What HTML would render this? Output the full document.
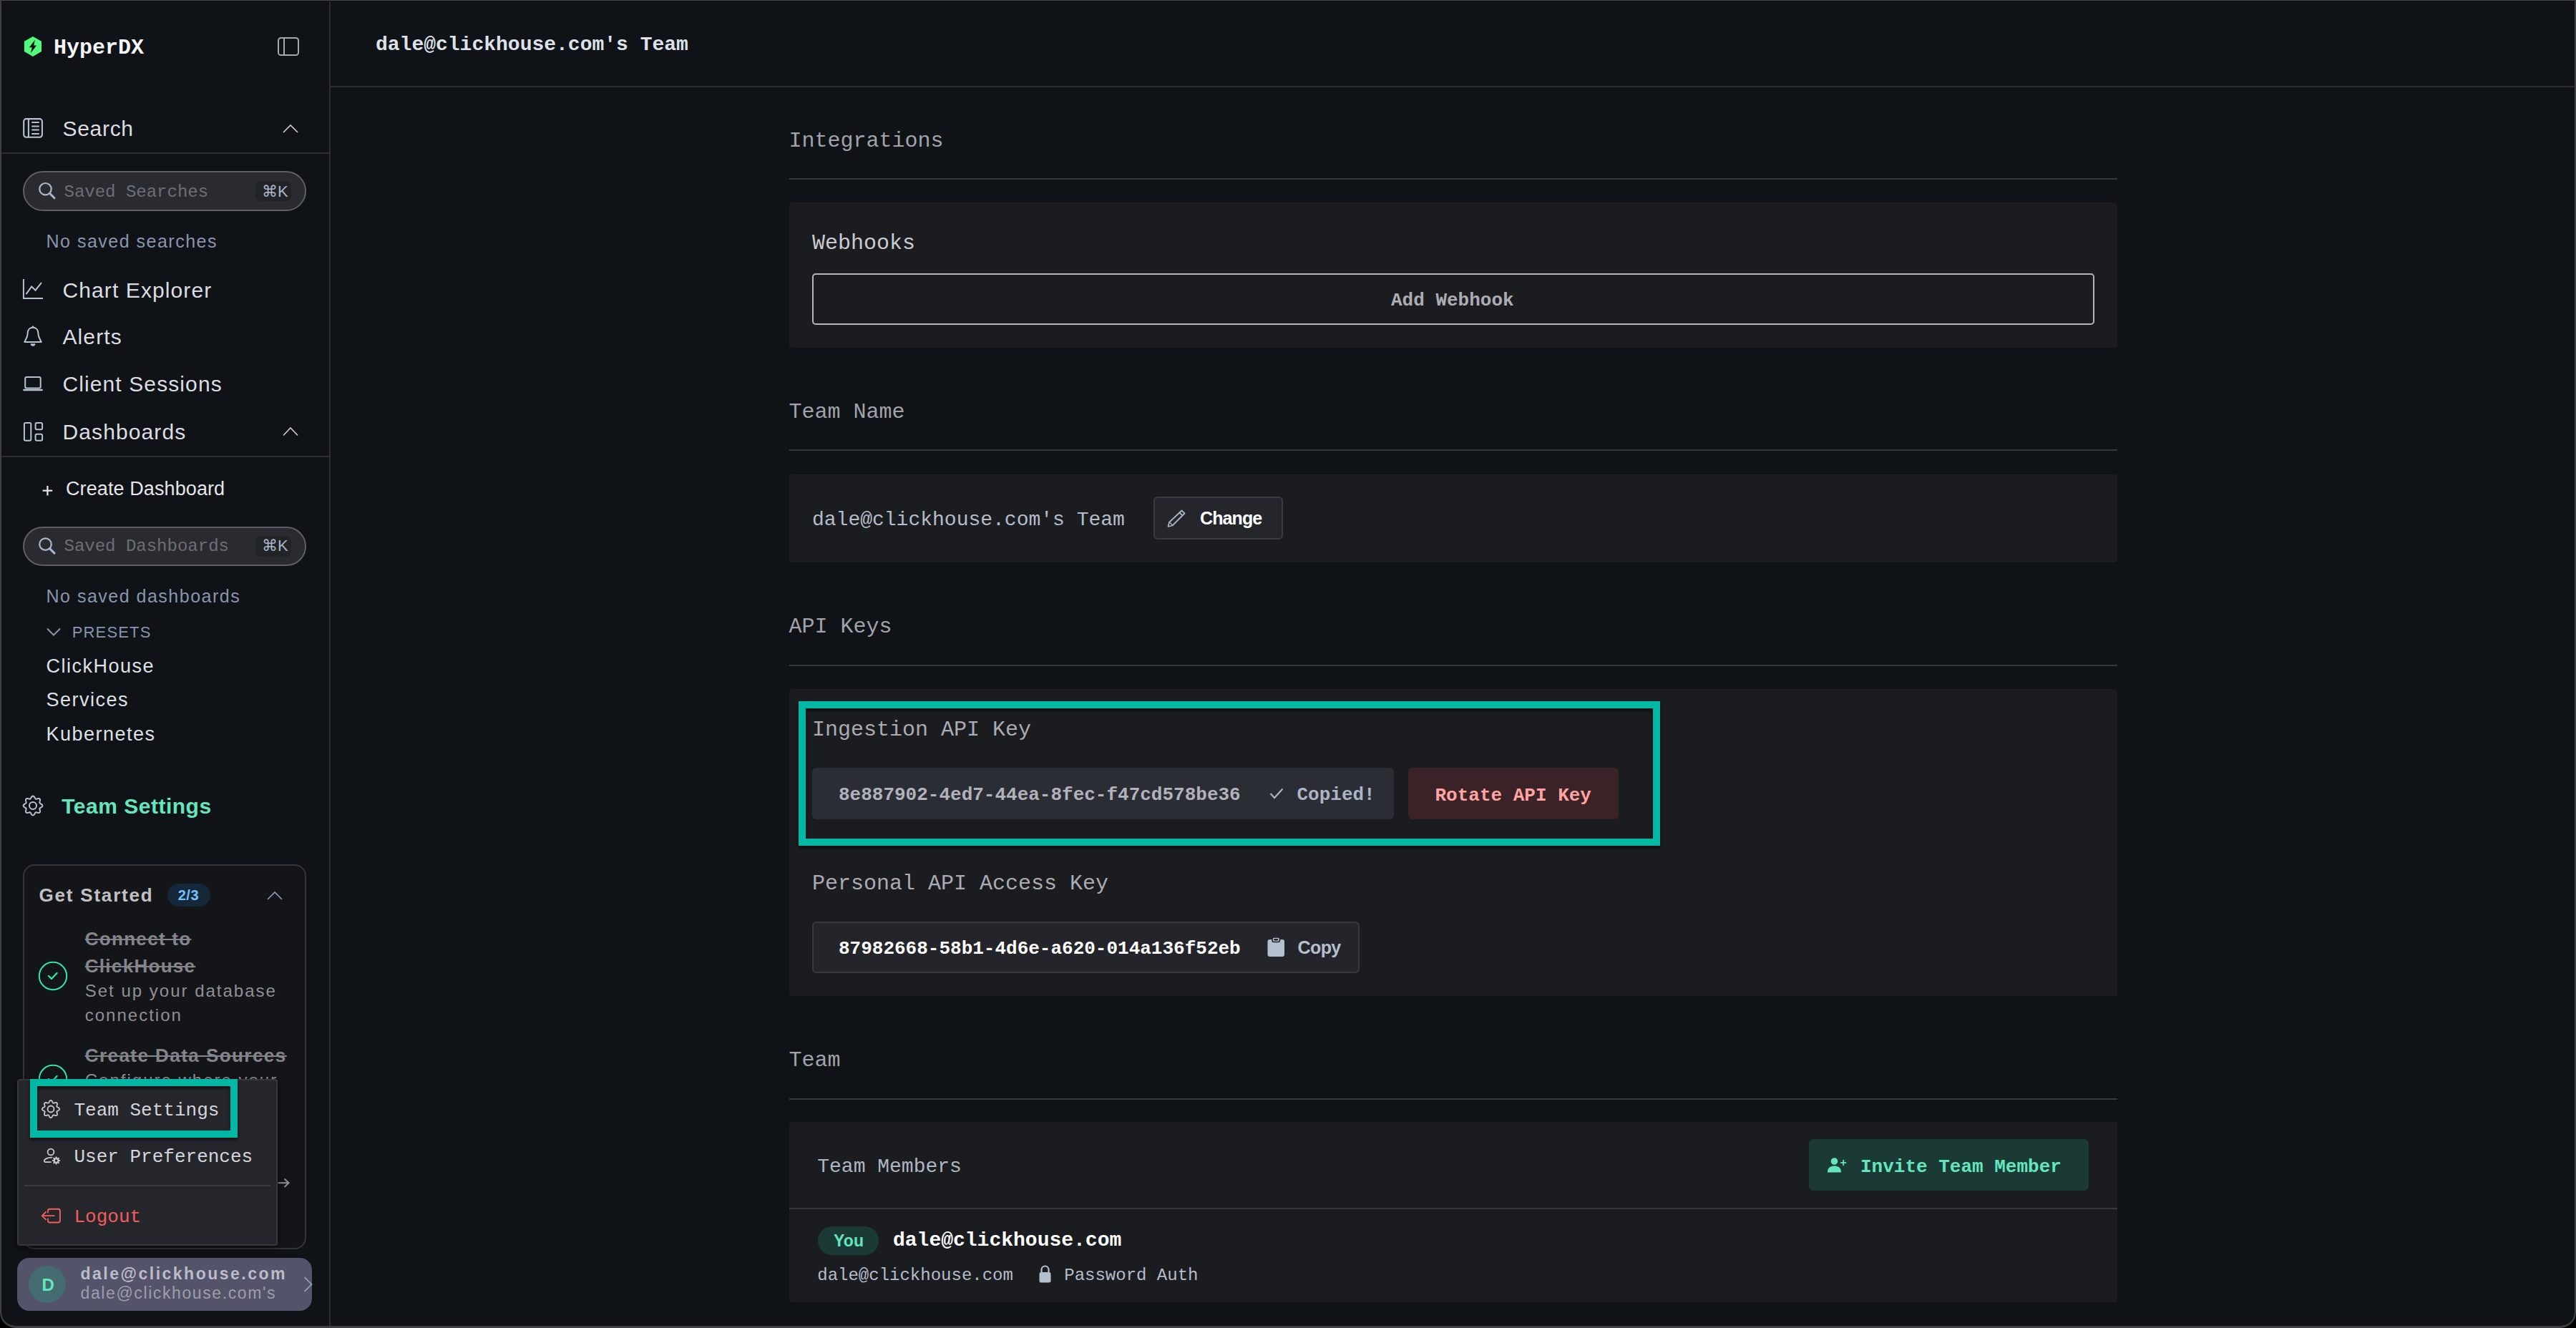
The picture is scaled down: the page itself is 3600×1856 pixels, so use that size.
<!DOCTYPE html>
<html><head><meta charset="utf-8"><title>HyperDX Team Settings</title>
<style>html,body{margin:0;padding:0;width:3600px;height:1856px;overflow:hidden;background:#000}</style>
</head><body><div style="position:relative;width:3600px;height:1856px;overflow:hidden">
<div style="position:absolute;left:0;top:0;width:3600px;height:1856px;background:#000"></div>
<div style="position:absolute;left:0;top:0;width:3596px;height:1852px;background:#0f1216;border:2px solid #3f4046;border-top-width:1px;border-top-color:#47464e;border-bottom-width:3px;border-radius:0 0 22px 22px;overflow:hidden"></div>
<div style="position:absolute;left:460px;top:2px;width:2px;height:1851px;background:#2b2d32"></div>
<div style="position:absolute;left:462px;top:120px;width:3136px;height:2px;background:#2b2d32"></div>
<svg style="position:absolute;left:30px;top:48px;" width="32" height="34" viewBox="30 48 32 34"><polygon points="45.95,50.9 58,57.7 58,72 45.95,78.9 33.9,72 33.9,57.7" fill="#52f97b"/><polygon points="48.9,55.7 40.9,66.3 44.8,66.3 42.9,74.3 51.1,63.5 47.2,63.5" fill="#0b0d0f"/></svg>
<div style="position:absolute;left:75.00px;top:52.12px;font-family:'Liberation Mono', monospace;font-size:30px;line-height:30px;font-weight:700;color:#f4f5f7;letter-spacing:0px;white-space:pre;">HyperDX</div>
<svg style="position:absolute;left:384px;top:48px;" width="40" height="34" viewBox="384 48 40 34"><rect x="389" y="53" width="28" height="24" rx="3.5" fill="none" stroke="#a6a8b0" stroke-width="2"/><line x1="397" y1="53" x2="397" y2="77" stroke="#a6a8b0" stroke-width="2"/></svg>
<svg style="position:absolute;left:28px;top:160px;" width="36" height="38" viewBox="28 160 36 38"><rect x="33.2" y="166.1" width="25.7" height="25.7" rx="3.5" fill="none" stroke="#b8c1cf" stroke-width="2.1"/><line x1="39.9" y1="166" x2="39.9" y2="192" stroke="#b8c1cf" stroke-width="2.1"/><line x1="45" y1="171" x2="54" y2="171" stroke="#b8c1cf" stroke-width="2" stroke-linecap="round"/><line x1="45" y1="176.4" x2="54" y2="176.4" stroke="#b8c1cf" stroke-width="2" stroke-linecap="round"/><line x1="45" y1="181.6" x2="54" y2="181.6" stroke="#b8c1cf" stroke-width="2" stroke-linecap="round"/><line x1="45" y1="187" x2="54" y2="187" stroke="#b8c1cf" stroke-width="2" stroke-linecap="round"/></svg>
<div style="position:absolute;left:87.50px;top:165.10px;font-family:'Liberation Sans', sans-serif;font-size:30px;line-height:30px;font-weight:400;color:#dcdde1;letter-spacing:0.7px;white-space:pre;">Search</div>
<svg style="position:absolute;left:394px;top:171.5px;" width="24" height="16.0" viewBox="394 171.5 24 16.0"><polyline points="396,184.5 406,174.5 416,184.5" fill="none" stroke="#c9cad0" stroke-width="1.7"/></svg>
<div style="position:absolute;left:2px;top:213px;width:458px;height:2px;background:#2b2d32"></div>
<div style="position:absolute;left:32px;top:239px;width:391.5px;height:51.5px;border:2px solid #5d5e66;border-radius:30px;background:#2a2b31"></div>
<svg style="position:absolute;left:50px;top:250px;" width="32" height="32" viewBox="50 250 32 32"><circle cx="63.5" cy="264.2" r="8.2" fill="none" stroke="#a9b7ca" stroke-width="2.2"/><line x1="69.5" y1="270.2" x2="76" y2="276.8" stroke="#a9b7ca" stroke-width="3" stroke-linecap="round"/></svg>
<div style="position:absolute;left:89.50px;top:256.89px;font-family:'Liberation Mono', monospace;font-size:24px;line-height:24px;font-weight:400;color:#6d6e75;letter-spacing:0px;white-space:pre;">Saved Searches</div>
<div style="position:absolute;left:357px;top:252.5px;width:50px;height:28.5px;background:#222327;border-radius:8px"></div>
<div style="position:absolute;left:366.00px;top:257.37px;font-family:'Liberation Sans', sans-serif;font-size:22px;line-height:22px;font-weight:400;color:#a9b6c8;letter-spacing:0px;white-space:pre;">⌘K</div>
<div style="position:absolute;left:64.50px;top:325.08px;font-family:'Liberation Sans', sans-serif;font-size:25px;line-height:25px;font-weight:400;color:#8795ad;letter-spacing:1.5px;white-space:pre;">No saved searches</div>
<svg style="position:absolute;left:28px;top:386px;" width="36" height="36" viewBox="28 386 36 36"><polyline points="32.9,389.9 32.9,417 60,417" fill="none" stroke="#b8c1cf" stroke-width="2"/><polyline points="37,410.4 44.2,400.5 49.5,405.7 57.5,395.6" fill="none" stroke="#b8c1cf" stroke-width="2" stroke-linecap="round"/></svg>
<div style="position:absolute;left:87.50px;top:390.85px;font-family:'Liberation Sans', sans-serif;font-size:30px;line-height:30px;font-weight:400;color:#dcdde1;letter-spacing:1.1px;white-space:pre;">Chart Explorer</div>
<svg style="position:absolute;left:28px;top:452px;" width="36" height="36" viewBox="28 452 36 36"><path d="M34.3,478 L37.6,471 C38.3,469 38.6,467 38.7,465 C39,460.5 42,457.7 46,457.7 C50,457.7 53,460.5 53.3,465 C53.4,467 53.7,469 54.4,471 L57.7,478 Z" fill="none" stroke="#b8c1cf" stroke-width="2" stroke-linejoin="round"/><circle cx="46" cy="456.8" r="1.4" fill="#b8c1cf"/><path d="M42.6,480.3 A3.4,3.4 0 0 0 49.4,480.3 Z" fill="#b8c1cf"/></svg>
<div style="position:absolute;left:87.50px;top:456.35px;font-family:'Liberation Sans', sans-serif;font-size:30px;line-height:30px;font-weight:400;color:#dcdde1;letter-spacing:1.1px;white-space:pre;">Alerts</div>
<svg style="position:absolute;left:28px;top:520px;" width="36" height="32" viewBox="28 520 36 32"><rect x="35.2" y="527.1" width="21.5" height="15.3" rx="2" fill="none" stroke="#b8c1cf" stroke-width="2"/><rect x="32.2" y="543.8" width="27.7" height="2.4" rx="1.2" fill="#b8c1cf"/></svg>
<div style="position:absolute;left:87.50px;top:522.10px;font-family:'Liberation Sans', sans-serif;font-size:30px;line-height:30px;font-weight:400;color:#dcdde1;letter-spacing:1.1px;white-space:pre;">Client Sessions</div>
<svg style="position:absolute;left:28px;top:585px;" width="36" height="36" viewBox="28 585 36 36"><rect x="33.9" y="591" width="9.4" height="24.8" rx="1.8" fill="none" stroke="#b8c1cf" stroke-width="2"/><rect x="49.6" y="591" width="9.5" height="9.3" rx="1.8" fill="none" stroke="#b8c1cf" stroke-width="2"/><rect x="49.6" y="606.7" width="9.5" height="9.1" rx="1.8" fill="none" stroke="#b8c1cf" stroke-width="2"/></svg>
<div style="position:absolute;left:87.50px;top:588.85px;font-family:'Liberation Sans', sans-serif;font-size:30px;line-height:30px;font-weight:400;color:#dcdde1;letter-spacing:1.1px;white-space:pre;">Dashboards</div>
<svg style="position:absolute;left:394px;top:595px;" width="24" height="16.5" viewBox="394 595 24 16.5"><polyline points="396,608.5 406,598 416,608.5" fill="none" stroke="#c9cad0" stroke-width="1.7"/></svg>
<div style="position:absolute;left:2px;top:636.5px;width:458px;height:2.0px;background:#2b2d32"></div>
<svg style="position:absolute;left:56px;top:675px;" width="20" height="20" viewBox="56 675 20 20"><line x1="66.4" y1="679" x2="66.4" y2="692.5" stroke="#e6e7ea" stroke-width="2.2"/><line x1="59.6" y1="685.7" x2="73.2" y2="685.7" stroke="#e6e7ea" stroke-width="2.2"/></svg>
<div style="position:absolute;left:92.00px;top:670.39px;font-family:'Liberation Sans', sans-serif;font-size:27px;line-height:27px;font-weight:400;color:#e4e5e8;letter-spacing:0.1px;white-space:pre;">Create Dashboard</div>
<div style="position:absolute;left:32px;top:735.5px;width:391.5px;height:51.25px;border:2px solid #5d5e66;border-radius:30px;background:#2a2b31"></div>
<svg style="position:absolute;left:50px;top:747px;" width="32" height="32" viewBox="50 747 32 32"><circle cx="63.5" cy="760.6" r="8.2" fill="none" stroke="#a9b7ca" stroke-width="2.2"/><line x1="69.5" y1="766.6" x2="76" y2="773.1" stroke="#a9b7ca" stroke-width="3" stroke-linecap="round"/></svg>
<div style="position:absolute;left:89.50px;top:751.89px;font-family:'Liberation Mono', monospace;font-size:24px;line-height:24px;font-weight:400;color:#6d6e75;letter-spacing:0px;white-space:pre;">Saved Dashboards</div>
<div style="position:absolute;left:357px;top:749.0px;width:50px;height:28.5px;background:#222327;border-radius:8px"></div>
<div style="position:absolute;left:366.00px;top:752.37px;font-family:'Liberation Sans', sans-serif;font-size:22px;line-height:22px;font-weight:400;color:#a9b6c8;letter-spacing:0px;white-space:pre;">⌘K</div>
<div style="position:absolute;left:64.50px;top:820.58px;font-family:'Liberation Sans', sans-serif;font-size:25px;line-height:25px;font-weight:400;color:#8795ad;letter-spacing:1.5px;white-space:pre;">No saved dashboards</div>
<svg style="position:absolute;left:62px;top:872px;" width="26" height="20" viewBox="62 872 26 20"><polyline points="66,878.5 75,887.5 84,878.5" fill="none" stroke="#8795ad" stroke-width="2"/></svg>
<div style="position:absolute;left:100.75px;top:873.37px;font-family:'Liberation Sans', sans-serif;font-size:22px;line-height:22px;font-weight:400;color:#8795ad;letter-spacing:1.15px;white-space:pre;">PRESETS</div>
<div style="position:absolute;left:64.50px;top:917.89px;font-family:'Liberation Sans', sans-serif;font-size:27px;line-height:27px;font-weight:400;color:#dfe0e6;letter-spacing:1.5px;white-space:pre;">ClickHouse</div>
<div style="position:absolute;left:64.50px;top:965.14px;font-family:'Liberation Sans', sans-serif;font-size:27px;line-height:27px;font-weight:400;color:#dfe0e6;letter-spacing:1.5px;white-space:pre;">Services</div>
<div style="position:absolute;left:64.50px;top:1012.64px;font-family:'Liberation Sans', sans-serif;font-size:27px;line-height:27px;font-weight:400;color:#dfe0e6;letter-spacing:1.5px;white-space:pre;">Kubernetes</div>
<svg style="position:absolute;left:28px;top:1108px;" width="36" height="36" viewBox="28 1108 36 36"><path d="M46.00,1112.60 L46.35,1112.64 L46.69,1112.76 L47.03,1112.95 L47.35,1113.20 L47.64,1113.51 L47.92,1113.86 L48.18,1114.23 L48.42,1114.62 L48.64,1115.01 L48.85,1115.37 L49.05,1115.71 L49.25,1116.01 L49.45,1116.25 L49.67,1116.44 L49.90,1116.58 L50.16,1116.65 L50.45,1116.67 L50.77,1116.64 L51.12,1116.57 L51.50,1116.47 L51.91,1116.36 L52.34,1116.24 L52.78,1116.14 L53.23,1116.05 L53.67,1116.00 L54.10,1116.00 L54.50,1116.04 L54.87,1116.14 L55.20,1116.31 L55.48,1116.52 L55.69,1116.80 L55.86,1117.13 L55.96,1117.50 L56.00,1117.90 L56.00,1118.33 L55.95,1118.77 L55.86,1119.22 L55.76,1119.66 L55.64,1120.09 L55.53,1120.50 L55.43,1120.88 L55.36,1121.23 L55.33,1121.55 L55.35,1121.84 L55.42,1122.10 L55.56,1122.33 L55.75,1122.55 L55.99,1122.75 L56.29,1122.95 L56.63,1123.15 L56.99,1123.36 L57.38,1123.58 L57.77,1123.82 L58.14,1124.08 L58.49,1124.36 L58.80,1124.65 L59.05,1124.97 L59.24,1125.31 L59.36,1125.65 L59.40,1126.00 L59.36,1126.35 L59.24,1126.69 L59.05,1127.03 L58.80,1127.35 L58.49,1127.64 L58.14,1127.92 L57.77,1128.18 L57.38,1128.42 L56.99,1128.64 L56.63,1128.85 L56.29,1129.05 L55.99,1129.25 L55.75,1129.45 L55.56,1129.67 L55.42,1129.90 L55.35,1130.16 L55.33,1130.45 L55.36,1130.77 L55.43,1131.12 L55.53,1131.50 L55.64,1131.91 L55.76,1132.34 L55.86,1132.78 L55.95,1133.23 L56.00,1133.67 L56.00,1134.10 L55.96,1134.50 L55.86,1134.87 L55.69,1135.20 L55.48,1135.48 L55.20,1135.69 L54.87,1135.86 L54.50,1135.96 L54.10,1136.00 L53.67,1136.00 L53.23,1135.95 L52.78,1135.86 L52.34,1135.76 L51.91,1135.64 L51.50,1135.53 L51.12,1135.43 L50.77,1135.36 L50.45,1135.33 L50.16,1135.35 L49.90,1135.42 L49.67,1135.56 L49.45,1135.75 L49.25,1135.99 L49.05,1136.29 L48.85,1136.63 L48.64,1136.99 L48.42,1137.38 L48.18,1137.77 L47.92,1138.14 L47.64,1138.49 L47.35,1138.80 L47.03,1139.05 L46.69,1139.24 L46.35,1139.36 L46.00,1139.40 L45.65,1139.36 L45.31,1139.24 L44.97,1139.05 L44.65,1138.80 L44.36,1138.49 L44.08,1138.14 L43.82,1137.77 L43.58,1137.38 L43.36,1136.99 L43.15,1136.63 L42.95,1136.29 L42.75,1135.99 L42.55,1135.75 L42.33,1135.56 L42.10,1135.42 L41.84,1135.35 L41.55,1135.33 L41.23,1135.36 L40.88,1135.43 L40.50,1135.53 L40.09,1135.64 L39.66,1135.76 L39.22,1135.86 L38.77,1135.95 L38.33,1136.00 L37.90,1136.00 L37.50,1135.96 L37.13,1135.86 L36.80,1135.69 L36.52,1135.48 L36.31,1135.20 L36.14,1134.87 L36.04,1134.50 L36.00,1134.10 L36.00,1133.67 L36.05,1133.23 L36.14,1132.78 L36.24,1132.34 L36.36,1131.91 L36.47,1131.50 L36.57,1131.12 L36.64,1130.77 L36.67,1130.45 L36.65,1130.16 L36.58,1129.90 L36.44,1129.67 L36.25,1129.45 L36.01,1129.25 L35.71,1129.05 L35.37,1128.85 L35.01,1128.64 L34.62,1128.42 L34.23,1128.18 L33.86,1127.92 L33.51,1127.64 L33.20,1127.35 L32.95,1127.03 L32.76,1126.69 L32.64,1126.35 L32.60,1126.00 L32.64,1125.65 L32.76,1125.31 L32.95,1124.97 L33.20,1124.65 L33.51,1124.36 L33.86,1124.08 L34.23,1123.82 L34.62,1123.58 L35.01,1123.36 L35.37,1123.15 L35.71,1122.95 L36.01,1122.75 L36.25,1122.55 L36.44,1122.33 L36.58,1122.10 L36.65,1121.84 L36.67,1121.55 L36.64,1121.23 L36.57,1120.88 L36.47,1120.50 L36.36,1120.09 L36.24,1119.66 L36.14,1119.22 L36.05,1118.77 L36.00,1118.33 L36.00,1117.90 L36.04,1117.50 L36.14,1117.13 L36.31,1116.80 L36.52,1116.52 L36.80,1116.31 L37.13,1116.14 L37.50,1116.04 L37.90,1116.00 L38.33,1116.00 L38.77,1116.05 L39.22,1116.14 L39.66,1116.24 L40.09,1116.36 L40.50,1116.47 L40.88,1116.57 L41.23,1116.64 L41.55,1116.67 L41.84,1116.65 L42.10,1116.58 L42.33,1116.44 L42.55,1116.25 L42.75,1116.01 L42.95,1115.71 L43.15,1115.37 L43.36,1115.01 L43.58,1114.62 L43.82,1114.23 L44.08,1113.86 L44.36,1113.51 L44.65,1113.20 L44.97,1112.95 L45.31,1112.76 L45.65,1112.64 Z" fill="none" stroke="#b8c1cf" stroke-width="2"/><circle cx="46" cy="1126" r="5" fill="none" stroke="#b8c1cf" stroke-width="2"/></svg>
<div style="position:absolute;left:86.25px;top:1112.10px;font-family:'Liberation Sans', sans-serif;font-size:30px;line-height:30px;font-weight:700;color:#63e6be;letter-spacing:0.5px;white-space:pre;">Team Settings</div>
<div style="position:absolute;left:32px;top:1207.5px;width:391.5px;height:534.75px;border:2px solid #34353a;border-radius:16px;background:#141518"></div>
<div style="position:absolute;left:54.50px;top:1237.99px;font-family:'Liberation Sans', sans-serif;font-size:26px;line-height:26px;font-weight:700;color:#c0c1c6;letter-spacing:1.8px;white-space:pre;">Get Started</div>
<div style="position:absolute;left:234.25px;top:1235px;width:59.5px;height:32px;background:#15283a;border-radius:16px"></div>
<div style="position:absolute;left:248.75px;top:1240.57px;font-family:'Liberation Sans', sans-serif;font-size:20px;line-height:20px;font-weight:700;color:#74c0fc;letter-spacing:0.5px;white-space:pre;">2/3</div>
<svg style="position:absolute;left:372px;top:1243.5px;" width="24" height="16.0" viewBox="372 1243.5 24 16.0"><polyline points="374,1256.5 384,1246.5 394,1256.5" fill="none" stroke="#8d9bb0" stroke-width="1.7"/></svg>
<svg style="position:absolute;left:52px;top:1342px;" width="44" height="44" viewBox="52 1342 44 44"><circle cx="74" cy="1364" r="19.2" fill="none" stroke="#2ee6a6" stroke-width="2"/><polyline points="68,1364 72,1368 79.5,1360" fill="none" stroke="#2ee6a6" stroke-width="2.4" stroke-linecap="round" stroke-linejoin="round"/></svg>
<div style="position:absolute;left:118.75px;top:1299.24px;font-family:'Liberation Sans', sans-serif;font-size:26px;line-height:26px;font-weight:700;color:#84858c;letter-spacing:1.3px;white-space:pre;text-decoration:line-through;text-decoration-thickness:2px">Connect to</div>
<div style="position:absolute;left:118.75px;top:1336.74px;font-family:'Liberation Sans', sans-serif;font-size:26px;line-height:26px;font-weight:700;color:#84858c;letter-spacing:1.3px;white-space:pre;text-decoration:line-through;text-decoration-thickness:2px">ClickHouse</div>
<div style="position:absolute;left:118.75px;top:1373.43px;font-family:'Liberation Sans', sans-serif;font-size:24px;line-height:24px;font-weight:400;color:#8f9096;letter-spacing:2.0px;white-space:pre;">Set up your database</div>
<div style="position:absolute;left:118.75px;top:1407.18px;font-family:'Liberation Sans', sans-serif;font-size:24px;line-height:24px;font-weight:400;color:#8f9096;letter-spacing:2.0px;white-space:pre;">connection</div>
<div style="position:absolute;left:118.75px;top:1461.74px;font-family:'Liberation Sans', sans-serif;font-size:26px;line-height:26px;font-weight:700;color:#84858c;letter-spacing:1.45px;white-space:pre;text-decoration:line-through;text-decoration-thickness:2px">Create Data Sources</div>
<svg style="position:absolute;left:52px;top:1486px;" width="44" height="44" viewBox="52 1486 44 44"><circle cx="74" cy="1508" r="19.2" fill="none" stroke="#2ee6a6" stroke-width="2"/><polyline points="68,1508 72,1512 79.5,1504" fill="none" stroke="#2ee6a6" stroke-width="2.4" stroke-linecap="round" stroke-linejoin="round"/></svg>
<div style="position:absolute;left:118.75px;top:1497.68px;font-family:'Liberation Sans', sans-serif;font-size:24px;line-height:24px;font-weight:400;color:#8f9096;letter-spacing:2.0px;white-space:pre;">Configure where your</div>
<svg style="position:absolute;left:384px;top:1644px;" width="24" height="18" viewBox="384 1644 24 18"><line x1="388.5" y1="1653.2" x2="403.5" y2="1653.2" stroke="#8f9096" stroke-width="2"/><polyline points="397.5,1647.5 403.5,1653.2 397.5,1659" fill="none" stroke="#8f9096" stroke-width="2"/></svg>
<div style="position:absolute;left:24.25px;top:1507.5px;width:359.25px;height:229.75px;border:2px solid #36373c;border-radius:4px;background:#25262c;box-shadow:0 4px 12px rgba(0,0,0,0.45)"></div>
<div style="position:absolute;left:42px;top:1508.25px;width:270px;height:61.25px;border:10px solid #00b8a3;box-shadow:0 3px 4px rgba(0,0,0,0.6), inset 0 3px 5px rgba(0,0,0,0.6)"></div>
<svg style="position:absolute;left:54px;top:1533px;" width="34" height="34" viewBox="54 1533 34 34"><path d="M71.00,1537.90 L71.32,1537.94 L71.63,1538.05 L71.93,1538.22 L72.21,1538.46 L72.48,1538.75 L72.73,1539.07 L72.96,1539.42 L73.17,1539.79 L73.37,1540.14 L73.55,1540.49 L73.73,1540.80 L73.90,1541.07 L74.08,1541.30 L74.27,1541.47 L74.48,1541.59 L74.71,1541.66 L74.97,1541.67 L75.26,1541.64 L75.58,1541.57 L75.92,1541.47 L76.30,1541.36 L76.69,1541.24 L77.09,1541.14 L77.50,1541.05 L77.91,1541.00 L78.30,1540.98 L78.67,1541.02 L79.01,1541.10 L79.31,1541.25 L79.56,1541.44 L79.75,1541.69 L79.90,1541.99 L79.98,1542.33 L80.02,1542.70 L80.00,1543.09 L79.95,1543.50 L79.86,1543.91 L79.76,1544.31 L79.64,1544.70 L79.53,1545.08 L79.43,1545.42 L79.36,1545.74 L79.33,1546.03 L79.34,1546.29 L79.41,1546.52 L79.53,1546.73 L79.70,1546.92 L79.93,1547.10 L80.20,1547.27 L80.51,1547.45 L80.86,1547.63 L81.21,1547.83 L81.58,1548.04 L81.93,1548.27 L82.25,1548.52 L82.54,1548.79 L82.78,1549.07 L82.95,1549.37 L83.06,1549.68 L83.10,1550.00 L83.06,1550.32 L82.95,1550.63 L82.78,1550.93 L82.54,1551.21 L82.25,1551.48 L81.93,1551.73 L81.58,1551.96 L81.21,1552.17 L80.86,1552.37 L80.51,1552.55 L80.20,1552.73 L79.93,1552.90 L79.70,1553.08 L79.53,1553.27 L79.41,1553.48 L79.34,1553.71 L79.33,1553.97 L79.36,1554.26 L79.43,1554.58 L79.53,1554.92 L79.64,1555.30 L79.76,1555.69 L79.86,1556.09 L79.95,1556.50 L80.00,1556.91 L80.02,1557.30 L79.98,1557.67 L79.90,1558.01 L79.75,1558.31 L79.56,1558.56 L79.31,1558.75 L79.01,1558.90 L78.67,1558.98 L78.30,1559.02 L77.91,1559.00 L77.50,1558.95 L77.09,1558.86 L76.69,1558.76 L76.30,1558.64 L75.92,1558.53 L75.58,1558.43 L75.26,1558.36 L74.97,1558.33 L74.71,1558.34 L74.48,1558.41 L74.27,1558.53 L74.08,1558.70 L73.90,1558.93 L73.73,1559.20 L73.55,1559.51 L73.37,1559.86 L73.17,1560.21 L72.96,1560.58 L72.73,1560.93 L72.48,1561.25 L72.21,1561.54 L71.93,1561.78 L71.63,1561.95 L71.32,1562.06 L71.00,1562.10 L70.68,1562.06 L70.37,1561.95 L70.07,1561.78 L69.79,1561.54 L69.52,1561.25 L69.27,1560.93 L69.04,1560.58 L68.83,1560.21 L68.63,1559.86 L68.45,1559.51 L68.27,1559.20 L68.10,1558.93 L67.92,1558.70 L67.73,1558.53 L67.52,1558.41 L67.29,1558.34 L67.03,1558.33 L66.74,1558.36 L66.42,1558.43 L66.08,1558.53 L65.70,1558.64 L65.31,1558.76 L64.91,1558.86 L64.50,1558.95 L64.09,1559.00 L63.70,1559.02 L63.33,1558.98 L62.99,1558.90 L62.69,1558.75 L62.44,1558.56 L62.25,1558.31 L62.10,1558.01 L62.02,1557.67 L61.98,1557.30 L62.00,1556.91 L62.05,1556.50 L62.14,1556.09 L62.24,1555.69 L62.36,1555.30 L62.47,1554.92 L62.57,1554.58 L62.64,1554.26 L62.67,1553.97 L62.66,1553.71 L62.59,1553.48 L62.47,1553.27 L62.30,1553.08 L62.07,1552.90 L61.80,1552.73 L61.49,1552.55 L61.14,1552.37 L60.79,1552.17 L60.42,1551.96 L60.07,1551.73 L59.75,1551.48 L59.46,1551.21 L59.22,1550.93 L59.05,1550.63 L58.94,1550.32 L58.90,1550.00 L58.94,1549.68 L59.05,1549.37 L59.22,1549.07 L59.46,1548.79 L59.75,1548.52 L60.07,1548.27 L60.42,1548.04 L60.79,1547.83 L61.14,1547.63 L61.49,1547.45 L61.80,1547.27 L62.07,1547.10 L62.30,1546.92 L62.47,1546.73 L62.59,1546.52 L62.66,1546.29 L62.67,1546.03 L62.64,1545.74 L62.57,1545.42 L62.47,1545.08 L62.36,1544.70 L62.24,1544.31 L62.14,1543.91 L62.05,1543.50 L62.00,1543.09 L61.98,1542.70 L62.02,1542.33 L62.10,1541.99 L62.25,1541.69 L62.44,1541.44 L62.69,1541.25 L62.99,1541.10 L63.33,1541.02 L63.70,1540.98 L64.09,1541.00 L64.50,1541.05 L64.91,1541.14 L65.31,1541.24 L65.70,1541.36 L66.08,1541.47 L66.42,1541.57 L66.74,1541.64 L67.03,1541.67 L67.29,1541.66 L67.52,1541.59 L67.73,1541.47 L67.92,1541.30 L68.10,1541.07 L68.27,1540.80 L68.45,1540.49 L68.63,1540.14 L68.83,1539.79 L69.04,1539.42 L69.27,1539.07 L69.52,1538.75 L69.79,1538.46 L70.07,1538.22 L70.37,1538.05 L70.68,1537.94 Z" fill="none" stroke="#c8c9ce" stroke-width="1.8"/><circle cx="71" cy="1550" r="4.5" fill="none" stroke="#c8c9ce" stroke-width="1.8"/></svg>
<div style="position:absolute;left:103.50px;top:1538.80px;font-family:'Liberation Mono', monospace;font-size:26px;line-height:26px;font-weight:400;color:#d4d5da;letter-spacing:0px;white-space:pre;">Team Settings</div>
<svg style="position:absolute;left:56px;top:1600px;" width="34" height="34" viewBox="56 1600 34 34"><circle cx="71" cy="1610" r="4.4" fill="none" stroke="#c8c9ce" stroke-width="1.8"/><path d="M72.5,1617.6 C66.5,1617.6 61.8,1620 61.8,1622.6 C61.8,1623.6 62.4,1624.1 63.4,1624.1 L71,1624.1" fill="none" stroke="#c8c9ce" stroke-width="1.8" stroke-linecap="round" stroke-linejoin="round"/><path d="M78.60,1616.20 L78.75,1616.22 L78.90,1616.29 L79.04,1616.41 L79.17,1616.56 L79.29,1616.75 L79.40,1616.95 L79.49,1617.18 L79.58,1617.41 L79.65,1617.63 L79.71,1617.85 L79.77,1618.04 L79.83,1618.20 L79.90,1618.34 L79.97,1618.43 L80.05,1618.49 L80.15,1618.51 L80.27,1618.49 L80.41,1618.44 L80.57,1618.37 L80.75,1618.28 L80.95,1618.17 L81.16,1618.06 L81.38,1617.96 L81.60,1617.87 L81.83,1617.80 L82.04,1617.75 L82.24,1617.73 L82.42,1617.75 L82.58,1617.81 L82.70,1617.90 L82.79,1618.02 L82.85,1618.18 L82.87,1618.36 L82.85,1618.56 L82.80,1618.77 L82.73,1619.00 L82.64,1619.22 L82.54,1619.44 L82.43,1619.65 L82.32,1619.85 L82.23,1620.03 L82.16,1620.19 L82.11,1620.33 L82.09,1620.45 L82.11,1620.55 L82.17,1620.63 L82.26,1620.70 L82.40,1620.77 L82.56,1620.83 L82.75,1620.89 L82.97,1620.95 L83.19,1621.02 L83.42,1621.11 L83.65,1621.20 L83.85,1621.31 L84.04,1621.43 L84.19,1621.56 L84.31,1621.70 L84.38,1621.85 L84.40,1622.00 L84.38,1622.15 L84.31,1622.30 L84.19,1622.44 L84.04,1622.57 L83.85,1622.69 L83.65,1622.80 L83.42,1622.89 L83.19,1622.98 L82.97,1623.05 L82.75,1623.11 L82.56,1623.17 L82.40,1623.23 L82.26,1623.30 L82.17,1623.37 L82.11,1623.45 L82.09,1623.55 L82.11,1623.67 L82.16,1623.81 L82.23,1623.97 L82.32,1624.15 L82.43,1624.35 L82.54,1624.56 L82.64,1624.78 L82.73,1625.00 L82.80,1625.23 L82.85,1625.44 L82.87,1625.64 L82.85,1625.82 L82.79,1625.98 L82.70,1626.10 L82.58,1626.19 L82.42,1626.25 L82.24,1626.27 L82.04,1626.25 L81.83,1626.20 L81.60,1626.13 L81.38,1626.04 L81.16,1625.94 L80.95,1625.83 L80.75,1625.72 L80.57,1625.63 L80.41,1625.56 L80.27,1625.51 L80.15,1625.49 L80.05,1625.51 L79.97,1625.57 L79.90,1625.66 L79.83,1625.80 L79.77,1625.96 L79.71,1626.15 L79.65,1626.37 L79.58,1626.59 L79.49,1626.82 L79.40,1627.05 L79.29,1627.25 L79.17,1627.44 L79.04,1627.59 L78.90,1627.71 L78.75,1627.78 L78.60,1627.80 L78.45,1627.78 L78.30,1627.71 L78.16,1627.59 L78.03,1627.44 L77.91,1627.25 L77.80,1627.05 L77.71,1626.82 L77.62,1626.59 L77.55,1626.37 L77.49,1626.15 L77.43,1625.96 L77.37,1625.80 L77.30,1625.66 L77.23,1625.57 L77.15,1625.51 L77.05,1625.49 L76.93,1625.51 L76.79,1625.56 L76.63,1625.63 L76.45,1625.72 L76.25,1625.83 L76.04,1625.94 L75.82,1626.04 L75.60,1626.13 L75.37,1626.20 L75.16,1626.25 L74.96,1626.27 L74.78,1626.25 L74.62,1626.19 L74.50,1626.10 L74.41,1625.98 L74.35,1625.82 L74.33,1625.64 L74.35,1625.44 L74.40,1625.23 L74.47,1625.00 L74.56,1624.78 L74.66,1624.56 L74.77,1624.35 L74.88,1624.15 L74.97,1623.97 L75.04,1623.81 L75.09,1623.67 L75.11,1623.55 L75.09,1623.45 L75.03,1623.37 L74.94,1623.30 L74.80,1623.23 L74.64,1623.17 L74.45,1623.11 L74.23,1623.05 L74.01,1622.98 L73.78,1622.89 L73.55,1622.80 L73.35,1622.69 L73.16,1622.57 L73.01,1622.44 L72.89,1622.30 L72.82,1622.15 L72.80,1622.00 L72.82,1621.85 L72.89,1621.70 L73.01,1621.56 L73.16,1621.43 L73.35,1621.31 L73.55,1621.20 L73.78,1621.11 L74.01,1621.02 L74.23,1620.95 L74.45,1620.89 L74.64,1620.83 L74.80,1620.77 L74.94,1620.70 L75.03,1620.63 L75.09,1620.55 L75.11,1620.45 L75.09,1620.33 L75.04,1620.19 L74.97,1620.03 L74.88,1619.85 L74.77,1619.65 L74.66,1619.44 L74.56,1619.22 L74.47,1619.00 L74.40,1618.77 L74.35,1618.56 L74.33,1618.36 L74.35,1618.18 L74.41,1618.02 L74.50,1617.90 L74.62,1617.81 L74.78,1617.75 L74.96,1617.73 L75.16,1617.75 L75.37,1617.80 L75.60,1617.87 L75.82,1617.96 L76.04,1618.06 L76.25,1618.17 L76.45,1618.28 L76.63,1618.37 L76.79,1618.44 L76.93,1618.49 L77.05,1618.51 L77.15,1618.49 L77.23,1618.43 L77.30,1618.34 L77.37,1618.20 L77.43,1618.04 L77.49,1617.85 L77.55,1617.63 L77.62,1617.41 L77.71,1617.18 L77.80,1616.95 L77.91,1616.75 L78.03,1616.56 L78.16,1616.41 L78.30,1616.29 L78.45,1616.22 Z" fill="#c8c9ce"/><circle cx="78.6" cy="1622" r="1.8" fill="#25262c"/></svg>
<div style="position:absolute;left:103.50px;top:1604.30px;font-family:'Liberation Mono', monospace;font-size:26px;line-height:26px;font-weight:400;color:#d4d5da;letter-spacing:0px;white-space:pre;">User Preferences</div>
<div style="position:absolute;left:34px;top:1656px;width:344px;height:2px;background:#3a3b40"></div>
<svg style="position:absolute;left:54px;top:1684px;" width="34" height="30" viewBox="54 1684 34 30"><path d="M67,1694.5 L67,1692.3 A2.5,2.5 0 0 1 69.5,1689.8 L81.4,1689.8 A2.5,2.5 0 0 1 83.9,1692.3 L83.9,1706 A2.5,2.5 0 0 1 81.4,1708.5 L69.5,1708.5 A2.5,2.5 0 0 1 67,1706 L67,1703.5" fill="none" stroke="#f25f5f" stroke-width="1.9" stroke-linecap="round"/><line x1="59" y1="1699.1" x2="75.8" y2="1699.1" stroke="#f25f5f" stroke-width="1.9" stroke-linecap="round"/><polyline points="64,1693.8 58.8,1699.1 64,1704.4" fill="none" stroke="#f25f5f" stroke-width="1.9" stroke-linecap="round" stroke-linejoin="round"/></svg>
<div style="position:absolute;left:103.50px;top:1688.05px;font-family:'Liberation Mono', monospace;font-size:26px;line-height:26px;font-weight:400;color:#f45c5c;letter-spacing:0px;white-space:pre;">Logout</div>
<div style="position:absolute;left:24.25px;top:1758px;width:412.0px;height:74px;background:#53536a;border-radius:17px"></div>
<div style="position:absolute;left:40px;top:1769px;width:52px;height:52px;border-radius:50%;background:#436b70"></div>
<div style="position:absolute;left:58.50px;top:1783.68px;font-family:'Liberation Sans', sans-serif;font-size:24px;line-height:24px;font-weight:700;color:#63e6be;letter-spacing:0px;white-space:pre;">D</div>
<div style="position:absolute;left:112.50px;top:1769.28px;font-family:'Liberation Sans', sans-serif;font-size:23px;line-height:23px;font-weight:700;color:#bcbcc8;letter-spacing:2.5px;white-space:pre;">dale@clickhouse.com</div>
<div style="position:absolute;left:112.50px;top:1795.78px;font-family:'Liberation Sans', sans-serif;font-size:23px;line-height:23px;font-weight:400;color:#9d9dab;letter-spacing:1.6px;white-space:pre;">dale@clickhouse.com's</div>
<svg style="position:absolute;left:420px;top:1780px;" width="20" height="30" viewBox="420 1780 20 30"><polyline points="425.5,1785 435.5,1795 425.5,1805" fill="none" stroke="#8b9bb5" stroke-width="1.8"/></svg>
<div style="position:absolute;left:525.00px;top:48.71px;font-family:'Liberation Mono', monospace;font-size:28px;line-height:28px;font-weight:700;color:#dee1e8;letter-spacing:0px;white-space:pre;">dale@clickhouse.com's Team</div>
<div style="position:absolute;left:1102.50px;top:181.62px;font-family:'Liberation Mono', monospace;font-size:30px;line-height:30px;font-weight:400;color:#a2a3aa;letter-spacing:0px;white-space:pre;">Integrations</div>
<div style="position:absolute;left:1103px;top:249px;width:1856px;height:2px;background:#36383d"></div>
<div style="position:absolute;left:1103px;top:283px;width:1856px;height:203px;background:#1b1c20;border-radius:4px"></div>
<div style="position:absolute;left:1135.00px;top:325.12px;font-family:'Liberation Mono', monospace;font-size:30px;line-height:30px;font-weight:400;color:#cacbd0;letter-spacing:0px;white-space:pre;">Webhooks</div>
<div style="position:absolute;left:1135px;top:382px;width:1788px;height:68px;border:2px solid #b3b4bc;border-radius:5px"></div>
<div style="position:absolute;left:1944.00px;top:406.55px;font-family:'Liberation Mono', monospace;font-size:26px;line-height:26px;font-weight:700;color:#abacb4;letter-spacing:0px;white-space:pre;">Add Webhook</div>
<div style="position:absolute;left:1102.50px;top:561.12px;font-family:'Liberation Mono', monospace;font-size:30px;line-height:30px;font-weight:400;color:#a2a3aa;letter-spacing:0px;white-space:pre;">Team Name</div>
<div style="position:absolute;left:1103px;top:628px;width:1856px;height:2px;background:#36383d"></div>
<div style="position:absolute;left:1103px;top:662.5px;width:1856px;height:123.5px;background:#1b1c20;border-radius:4px"></div>
<div style="position:absolute;left:1135.00px;top:712.71px;font-family:'Liberation Mono', monospace;font-size:28px;line-height:28px;font-weight:400;color:#b5bdca;letter-spacing:0px;white-space:pre;">dale@clickhouse.com's Team</div>
<div style="position:absolute;left:1612px;top:694px;width:177px;height:56px;border:2px solid #3a3b41;border-radius:6px;background:#25262c"></div>
<svg style="position:absolute;left:1628px;top:708px;" width="32" height="32" viewBox="1628 708 32 32"><path d="M1651.5,713.5 L1655.5,717.5 L1638.5,734.5 L1632.5,736 L1634,730 Z" fill="none" stroke="#a7b1c1" stroke-width="1.8" stroke-linejoin="round"/><line x1="1648.5" y1="716.5" x2="1652.5" y2="720.5" stroke="#a7b1c1" stroke-width="1.8"/><line x1="1634.5" y1="730" x2="1638.5" y2="734" stroke="#a7b1c1" stroke-width="1.5"/></svg>
<div style="position:absolute;left:1677.00px;top:711.83px;font-family:'Liberation Sans', sans-serif;font-size:25px;line-height:25px;font-weight:700;color:#ffffff;letter-spacing:-0.9px;white-space:pre;">Change</div>
<div style="position:absolute;left:1102.50px;top:861.12px;font-family:'Liberation Mono', monospace;font-size:30px;line-height:30px;font-weight:400;color:#a2a3aa;letter-spacing:0px;white-space:pre;">API Keys</div>
<div style="position:absolute;left:1103px;top:929px;width:1856px;height:2px;background:#36383d"></div>
<div style="position:absolute;left:1103px;top:963px;width:1856px;height:429px;background:#1b1c20;border-radius:4px"></div>
<div style="position:absolute;left:1135.00px;top:1005.12px;font-family:'Liberation Mono', monospace;font-size:30px;line-height:30px;font-weight:400;color:#aaabb3;letter-spacing:0px;white-space:pre;">Ingestion API Key</div>
<div style="position:absolute;left:1135px;top:1073px;width:813px;height:72px;background:#2b2d35;border-radius:6px"></div>
<div style="position:absolute;left:1172.00px;top:1098.05px;font-family:'Liberation Mono', monospace;font-size:26px;line-height:26px;font-weight:700;color:#b1b2bb;letter-spacing:0px;white-space:pre;">8e887902-4ed7-44ea-8fec-f47cd578be36</div>
<svg style="position:absolute;left:1770px;top:1096px;" width="28" height="26" viewBox="1770 1096 28 26"><polyline points="1775.5,1109 1781,1115 1792.5,1102.5" fill="none" stroke="#a9b3c2" stroke-width="2.2"/></svg>
<div style="position:absolute;left:1812.50px;top:1098.30px;font-family:'Liberation Mono', monospace;font-size:26px;line-height:26px;font-weight:700;color:#abb5c4;letter-spacing:0px;white-space:pre;">Copied!</div>
<div style="position:absolute;left:1968px;top:1073px;width:294px;height:72px;background:#3b2227;border-radius:6px"></div>
<div style="position:absolute;left:2005.50px;top:1098.55px;font-family:'Liberation Mono', monospace;font-size:26px;line-height:26px;font-weight:700;color:#ffa3a3;letter-spacing:0px;white-space:pre;">Rotate API Key</div>
<div style="position:absolute;left:1116px;top:980px;width:1184px;height:182px;border:10px solid #00b8a3;box-shadow:0 3px 4px rgba(0,0,0,0.6), inset 0 3px 5px rgba(0,0,0,0.6)"></div>
<div style="position:absolute;left:1135.00px;top:1219.87px;font-family:'Liberation Mono', monospace;font-size:30px;line-height:30px;font-weight:400;color:#aaabb3;letter-spacing:0px;white-space:pre;">Personal API Access Key</div>
<div style="position:absolute;left:1135px;top:1288px;width:761px;height:67.5px;border:2px solid #38393e;border-radius:6px;background:#24252b"></div>
<div style="position:absolute;left:1172.00px;top:1312.55px;font-family:'Liberation Mono', monospace;font-size:26px;line-height:26px;font-weight:700;color:#ffffff;letter-spacing:0px;white-space:pre;">87982668-58b1-4d6e-a620-014a136f52eb</div>
<svg style="position:absolute;left:1768px;top:1306px;" width="30" height="34" viewBox="1768 1306 30 34"><rect x="1771.5" y="1313" width="23.5" height="24" rx="3" fill="#b5c0cf"/><rect x="1778" y="1310" width="10.5" height="6.5" rx="2.2" fill="#b5c0cf" stroke="#24252b" stroke-width="1.6"/><rect x="1780.2" y="1312" width="6" height="2.6" rx="1" fill="#24252b"/></svg>
<div style="position:absolute;left:1813.50px;top:1312.08px;font-family:'Liberation Sans', sans-serif;font-size:25px;line-height:25px;font-weight:700;color:#b5c0cf;letter-spacing:-0.6px;white-space:pre;">Copy</div>
<div style="position:absolute;left:1102.50px;top:1466.87px;font-family:'Liberation Mono', monospace;font-size:30px;line-height:30px;font-weight:400;color:#a2a3aa;letter-spacing:0px;white-space:pre;">Team</div>
<div style="position:absolute;left:1103px;top:1535px;width:1856px;height:2px;background:#36383d"></div>
<div style="position:absolute;left:1103px;top:1568px;width:1856px;height:252px;background:#1b1c20;border-radius:4px"></div>
<div style="position:absolute;left:1142.25px;top:1617.21px;font-family:'Liberation Mono', monospace;font-size:28px;line-height:28px;font-weight:400;color:#aeb6c3;letter-spacing:0px;white-space:pre;">Team Members</div>
<div style="position:absolute;left:2528px;top:1592px;width:391px;height:71.5px;background:#1b3a35;border-radius:6px"></div>
<svg style="position:absolute;left:2550px;top:1612px;" width="34" height="30" viewBox="2550 1612 34 30"><circle cx="2563.5" cy="1623" r="4.8" fill="#63e6be"/><path d="M2554,1638.5 C2554,1632 2558,1629.5 2563.5,1629.5 C2569,1629.5 2573,1632 2573,1638.5 Z" fill="#63e6be"/><line x1="2576.2" y1="1621" x2="2576.2" y2="1629" stroke="#63e6be" stroke-width="1.8"/><line x1="2572.2" y1="1625" x2="2580.2" y2="1625" stroke="#63e6be" stroke-width="1.8"/></svg>
<div style="position:absolute;left:2600.00px;top:1618.30px;font-family:'Liberation Mono', monospace;font-size:26px;line-height:26px;font-weight:700;color:#63e6be;letter-spacing:0px;white-space:pre;">Invite Team Member</div>
<div style="position:absolute;left:1103px;top:1688px;width:1856px;height:2px;background:#36383d"></div>
<div style="position:absolute;left:1143px;top:1714.25px;width:84.75px;height:39.5px;background:#1b3a35;border-radius:20px"></div>
<div style="position:absolute;left:1165.00px;top:1722.53px;font-family:'Liberation Sans', sans-serif;font-size:23px;line-height:23px;font-weight:700;color:#63e6be;letter-spacing:0.2px;white-space:pre;">You</div>
<div style="position:absolute;left:1248.00px;top:1719.71px;font-family:'Liberation Mono', monospace;font-size:28px;line-height:28px;font-weight:700;color:#ffffff;letter-spacing:0px;white-space:pre;">dale@clickhouse.com</div>
<div style="position:absolute;left:1142.25px;top:1770.89px;font-family:'Liberation Mono', monospace;font-size:24px;line-height:24px;font-weight:400;color:#b5bdca;letter-spacing:0px;white-space:pre;">dale@clickhouse.com</div>
<svg style="position:absolute;left:1448px;top:1764px;" width="24" height="32" viewBox="1448 1764 24 32"><path d="M1455.5,1779 L1455.5,1774.5 A5,5 0 0 1 1465.5,1774.5 L1465.5,1779" fill="none" stroke="#b5c0cf" stroke-width="2.2"/><rect x="1452.5" y="1778" width="16" height="14.5" rx="2.5" fill="#b5c0cf"/></svg>
<div style="position:absolute;left:1487.25px;top:1770.89px;font-family:'Liberation Mono', monospace;font-size:24px;line-height:24px;font-weight:400;color:#b5bdca;letter-spacing:0px;white-space:pre;">Password Auth</div>
</div></body></html>
